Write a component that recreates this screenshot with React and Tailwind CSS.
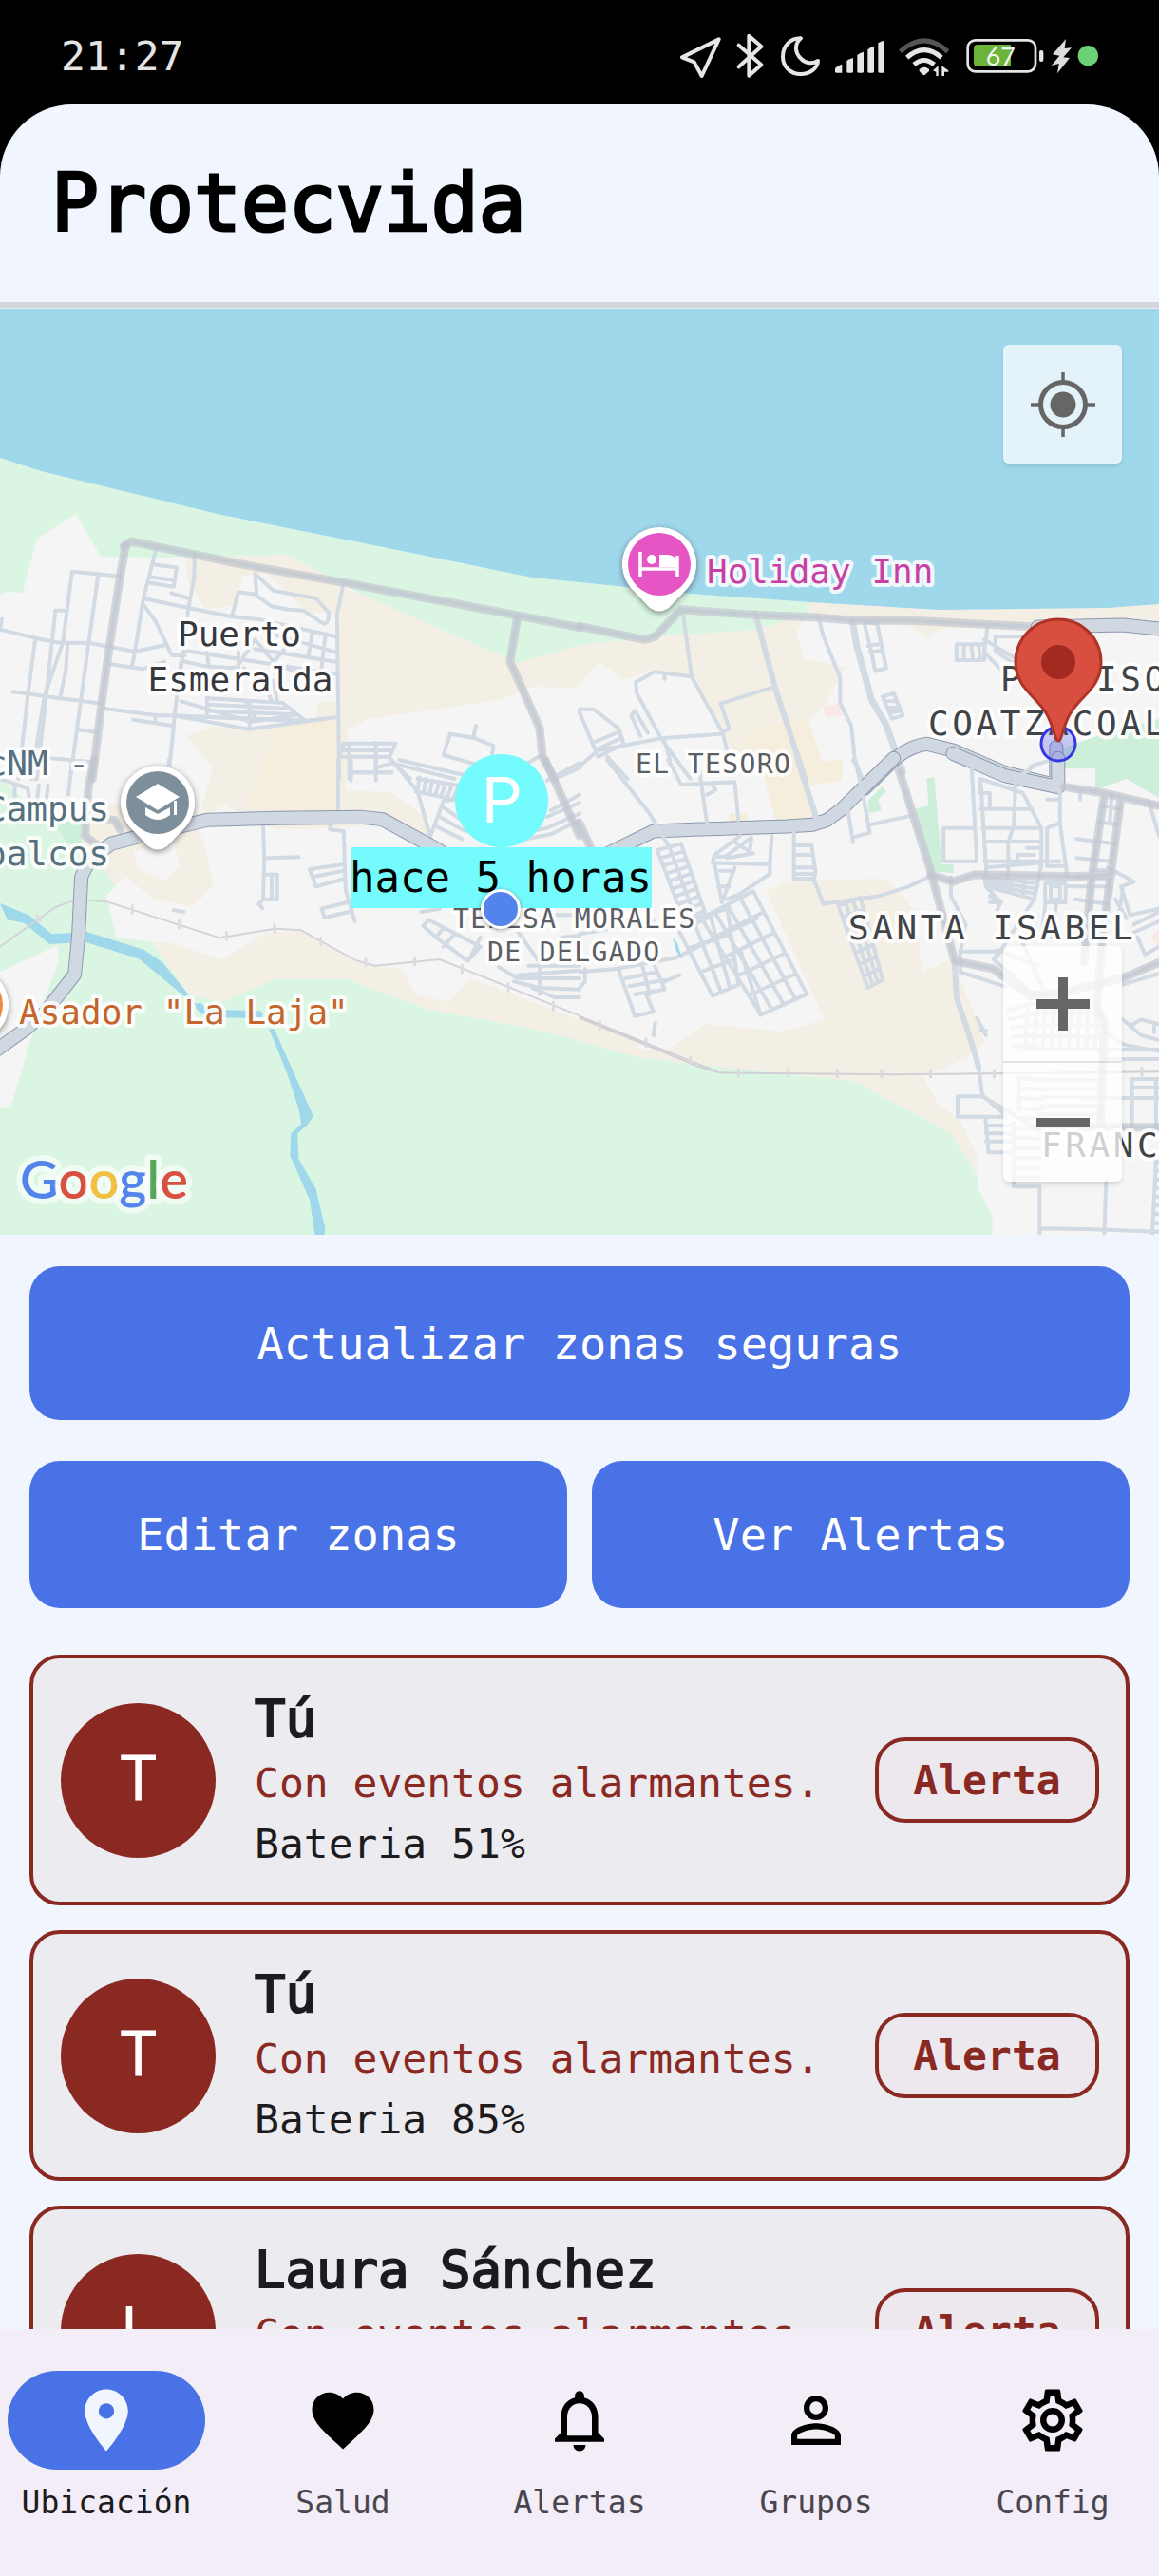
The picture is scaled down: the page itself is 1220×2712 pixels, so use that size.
import React from "react";
import {
  MdLocationOn,
  MdFavorite,
  MdNotificationsNone,
  MdPersonOutline,
  MdOutlineSettings,
} from "react-icons/md";

const members = [
  { id: 1, name: "Tú", initial: "T", battery: 51 },
  { id: 2, name: "Tú", initial: "T", battery: 85 },
  { id: 3, name: "Laura Sánchez", initial: "L", battery: 85 },
];

const tabs = [
  { label: "Ubicación", Icon: MdLocationOn, active: true },
  { label: "Salud", Icon: MdFavorite },
  { label: "Alertas", Icon: MdNotificationsNone },
  { label: "Grupos", Icon: MdPersonOutline },
  { label: "Config", Icon: MdOutlineSettings },
];

function StatusIcon({ x, w, className, children }) {
  return (
    <svg viewBox={`${x} 15 ${w} 180`} className={`h-[60px] ${className}`} aria-hidden="true">
      {children}
    </svg>
  );
}

function StatusBar() {
  return (
    <div className="flex h-[110px] shrink-0 items-center justify-between bg-black px-16 pt-2">
      <time className="text-[43px] leading-none text-[#e4e4e4]">21:27</time>
      <div className="-mt-2 flex items-center">
        <StatusIcon x={48} w={168} className="w-14">
          <path d="M170 64 L54 121 L92 136 L116 180 Z" fill="none" stroke="#e6e6e6" strokeWidth="12" strokeLinejoin="round" />
        </StatusIcon>
        <StatusIcon x={216} w={126} className="w-[42px]">
          <path d="M233 83 L304 145 L265 179 V53 L304 87 L233 151" fill="none" stroke="#e6e6e6" strokeWidth="12" strokeLinejoin="round" strokeLinecap="round" />
        </StatusIcon>
        <StatusIcon x={342} w={168} className="w-14">
          <path d="M429 61 C394 60 372 87 372 119 C372 150 396 174 428 174 C459 174 482 155 483 132 C466 143 445 141 430 126 C408 105 409 78 429 61 Z" fill="none" stroke="#e6e6e6" strokeWidth="12" strokeLinejoin="round" />
        </StatusIcon>
        <StatusIcon x={510} w={204} className="w-[68px]">
          <g fill="#e6e6e6">
            <path d="M537 156 Q546 146 559 143 V170 H541 Q537 170 537 166Z" />
            <path d="M574 132 Q582 126 594 123 V166 Q594 170 590 170 H578 Q574 170 574 166Z" />
            <path d="M607 114 Q616 106 627 104 V166 Q627 170 623 170 H611 Q607 170 607 166Z" />
            <path d="M640 97 Q648 89 660 86 V166 Q660 170 656 170 H644 Q640 170 640 166Z" />
            <path d="M673 76 Q681 70 693 68 V166 Q693 170 689 170 H677 Q673 170 673 166Z" />
          </g>
        </StatusIcon>
        <StatusIcon x={714} w={210} className="w-[70px]">
          <g fill="none" strokeWidth="15">
            <path d="M743 103 Q818 34 893 103" stroke="#555" />
            <path d="M764 122 Q818 74 873 122" stroke="#e6e6e6" />
            <path d="M786 144 Q818 117 850 144" stroke="#e6e6e6" />
          </g>
          <path d="M803 159 Q818 146 834 159 L834 165 L820 177 H815 L803 165Z" fill="#e6e6e6" />
          <path d="M846 163 L863 148 V180 H856 V167 Z M874 180 V148 L895 163 V167 H882 V180Z" fill="#e6e6e6" />
        </StatusIcon>
        <StatusIcon x={924} w={282} className="w-[94px]">
          <rect x="956" y="67" width="214" height="99" rx="24" fill="none" stroke="#e6e6e6" strokeWidth="8" />
          <path d="M987 81 H1092 V150 H987 Q975 150 975 138 V93 Q975 81 987 81Z" fill="#6cb33a" />
          <rect x="1182" y="99" width="13" height="36" rx="6" fill="#e6e6e6" />
          <text x="1060" y="146" textAnchor="middle" fill="#f2f7ee" fontSize="80" className="font-['Lato',sans-serif]">67</text>
        </StatusIcon>
        <StatusIcon x={1206} w={90} className="w-[30px]">
          <path d="M1266 63 L1224 112 L1246 116 L1220 147 L1244 141 L1239 172 L1278 123 L1258 121 L1284 91 L1262 93Z" fill="#dcdcdc" />
        </StatusIcon>
        <StatusIcon x={1296} w={72} className="w-6">
          <circle cx="1336" cy="116" r="32" fill="#6dd074" />
        </StatusIcon>
      </div>
    </div>
  );
}

// Evenly spaced lines that join edge a-b to edge c-d.
function hatch(a, b, c, d, n) {
  let out = "";
  for (let i = 0; i <= n; i++) {
    const t = i / n;
    const at = (p, q) => `${Math.round(p[0] + (q[0] - p[0]) * t)} ${Math.round(p[1] + (q[1] - p[1]) * t)}`;
    out += `M${at(a, b)}L${at(c, d)}`;
  }
  return out;
}

function mesh(a, b, c, d, rows, cols) {
  return hatch(a, d, b, c, rows) + hatch(a, b, d, c, cols);
}

const SAND = "#f4efe4";
const GREEN = "#daf6e3";
const WATER = "#a0d8eb";

function Line({ d, w = 4, c = "#d2dae3", o = 1 }) {
  return (
    <path d={d} fill="none" stroke={c} strokeWidth={w} strokeOpacity={o} strokeLinejoin="round" strokeLinecap="round" vectorEffect="non-scaling-stroke" />
  );
}

function Avenue({ d }) {
  return (
    <>
      <Line d={d} w={15} c="#8c98ad" />
      <Line d={d} w={13} c="#d0d8e2" />
    </>
  );
}

function Highway({ d, w = 9 }) {
  return (
    <>
      <Line d={d} w={w} c="#c5c8d0" o={0.7} />
      <Line d={d} w={w - 5} c="#bcc5cf" o={0.5} />
    </>
  );
}

// The map is drawn in four quadrants that share one local scale.
const NW = "translate(0 320) scale(.38903 .33333)";
const NE = "translate(610 320) scale(.38903 .33333)";
const SW = "translate(0 800) scale(.38903 .33333)";
const SE = "translate(610 800) scale(.38903 .33333)";

function Terrain() {
  return (
    <>
      <rect x="0" y="325" width="1220" height="975" fill="#f5f5f5" />
      <path fill={SAND} d="M379 625L545 698L610 679L707 669L797 663L849 647L838 667L847 693L890 702L867 745L851 758L863 803L773 793L760 773L731 712L688 705L657 716L631 697L607 724L560 723L525 737L389 757L366 767L365 832L412 834L447 860L453 880L401 868L323 873L288 873L237 848L210 860L224 807L196 775L222 765L265 768L356 757V617Z" />
      <path fill="#f6eedd" d="M289 763L356 757V860H330L260 850L280 800ZM796 766L851 758L866 803L886 798L886 822L850 827L858 860L817 865L800 803L780 790Z" />
      <g transform={NW}>
        <path fill={SAND} d="M500 800L780 792L930 885L910 975H835L720 850L655 860L640 950L555 965L510 880Z M858 1258H915V1310H858Z" />
      </g>
      <path fill={GREEN} d="M0 482L43 496L233 542L408 577L560 608L610 613L727 625L853 634L849 647L797 663L707 669L610 679L545 698L379 625L303 584L233 586L163 587L106 586L80 541L39 567L24 624L6 623L0 627Z" />
      <path fill={SAND} d="M853 634L987 642L1166 640L1220 636V655L1140 651L1060 658L990 662L975 671L960 660L849 648Z" />
      <path fill={WATER} d="M0 325H1220V636L1166 640L987 642L853 634L727 625L610 613L560 608L408 577L233 542L43 496L0 482Z" />
      <g transform={NE}>
        <path fill="#cdefd9" d="M1305 1405L1400 1365L1568 1310V1560L1480 1500L1396 1535V1468H1305Z" />
        <path fill="#fae8e6" d="M660 1275L710 1258L718 1300L668 1308Z" />
      </g>
      <g transform={SW}>
        <path fill={GREEN} d="M0 60L150 210L220 200L265 310L315 395L287 430L315 560L410 575L510 740L600 765L745 690L940 692L1150 785L1440 850L1570 886V1500H0V1098L30 1093L100 820L158 640L157 585L0 670Z" />
        <path fill="#cdefd9" d="M140 200L220 190L218 270L185 262Z" />
        <path fill={SAND} d="M220 130L330 140L440 240L520 190L548 250L577 395L525 462L415 440L340 368L310 395L265 320L225 290Z" />
        <path fill="#f5f5f5" d="M360 290L470 260L487 330L450 382L375 345Z" />
        <path fill={SAND} d="M410 572L470 580L600 632L720 545L815 540L960 640L1085 660L1125 742L1215 765L1275 690L1570 822V886L1440 850L1150 785L940 692H745L600 765L510 740Z" />
      </g>
      <g transform={SE}>
        <path fill={GREEN} d="M-2 888L160 940L380 970L745 1015L1005 1180L1077 1315V1350L1117 1440V1500H-2Z" />
        <path fill={SAND} d="M-2 805L160 880V915L240 915L340 835L550 857L662 820L505 415L575 378L830 375L905 470L927 668L1010 630L1097 890L1050 940L930 1000L970 1085L1030 1140L1075 1250V1310L1005 1180L745 1015L380 970L160 940L-2 888Z" />
        <path fill="#cdefd9" d="M905 155L945 145L938 60L960 55L980 330H1012V358L955 352ZM780 130L820 82L830 100L808 125L817 160L782 168Z" />
        <path fill="#f5efd9" d="M405 170H455L460 240H405Z" />
        <path fill="#fae8e6" d="M1545 560L1570 530V590Z" />
      </g>
    </>
  );
}

function Streets() {
  return (
    <>
      <g transform={SW}>
        <Line d="M540 780L560 800L700 805" w={8} c={WATER} />
        <path fill={WATER} d="M0 453L78 490L140 550L235 543L390 600L440 640L520 755L555 800L490 738L375 628L230 575L135 582L65 515L20 505Z M728 850L742 850L815 1040L848 1125L830 1155L805 1180L808 1260L855 1355L880 1480L878 1500H852L838 1390L785 1250L787 1180L815 1150L808 1100L775 985Z" />
        <Line d="M0 590L150 465L210 440L290 448L595 562L745 533L815 538L960 632L1015 650L1190 630L1568 808" w={2} c="#d3d3d8" />
        <Line d="M100 490L108 510M358 460V485M484 508V532M613 545V568M743 520V545M868 562V585M990 628V650M1122 625V648M1250 648V672M1375 706V730M1497 765V790" w={3} c="#dddde0" />
      </g>
      <g transform={SE}>
        <Line d="M0 810L380 988L850 994L1568 985M0 815L320 968L385 990" w={2} c="#d0d0d5" />
        <Line d="M55 825V850M180 882V905M300 938V960M430 978V1000M565 978V1000M697 980V1002M817 980V1002M950 980V1002M1122 980V1002M1522 972V995" w={3} c="#dbdbdf" />
      </g>

      <g transform={NW}>
        <Line d="M0 1028L95 1055L160 1070L240 1070L365 1098L445 1078M195 845L325 860M195 845L170 1070L120 1240L85 1500M150 968H175M150 968L125 1240L100 1500M265 862L240 1070L190 1500M35 1225L160 1245L275 1262M95 1062L75 1240L50 1500M183 1075L178 1160L163 1240M5 995L0 1030M212 1345L265 1353M137 1435L250 1447" />
        <Line d="M422 775L388 930L365 1098L358 1140M412 823L478 832L470 893L400 880M405 862L470 872M527 790L525 865L510 960L490 1150M388 930L510 960L625 987L705 997L908 1050M463 913L510 930M388 950L420 1000L465 1110H500M300 1138L385 1153L445 1130M283 1278L425 1300H470L820 1318L915 1305M470 1300L672 1343L915 1305M490 1130L472 1300L470 1335L455 1500M360 1313L470 1333M420 1300V1315" />
        <Line d="M690 853L740 905L855 930L890 975Q890 1010 875 1010L820 968L780 965L735 955L695 922ZM645 910L695 917M645 910L628 985M930 880L912 980L918 1500M500 1095L915 1170M700 1030L908 1100M690 1090L910 1130M845 1040L835 1110M880 1050L870 1150M500 1130L560 1145M560 1100L565 1145L640 1150M645 1140L690 1060L740 1130L770 1090M645 1100V1150M770 1150L800 1160M490 1255L680 1320L800 1298" />
        <Line d={mesh([560, 1245], [765, 1260], [825, 1315], [560, 1305], 3, 2)} />
        <Line d="M675 1260V1340M690 1170L720 1210L735 1255M740 1190L750 1255M660 1150L700 1200" />
        <Line d="M930 1388H1070L1055 1430H918M945 1388V1500M1017 1385V1480M930 1410H1060M1055 1440L1110 1500M1017 1465L1060 1450L1230 1500M950 1480H1060" />
        <Line d="M1288 1332L1280 1370M1218 1358L1280 1370L1335 1395L1330 1440M1218 1358L1200 1425L1290 1455M1420 1455L1465 1425M1500 1500L1568 1465M930 1388L918 1430" />
        <Highway d="M340 762L325 860L295 1090L275 1260L250 1500" />
        <Highway d="M335 765L355 750L675 827L930 880L1240 948L1568 1022" />
        <Highway d="M1400 990L1380 1130L1415 1220L1460 1340L1468 1430L1500 1500" />
      </g>

      <g transform={NE}>
        <Line d="M280 975L303 1175M203 1162L303 1177M203 1162L152 1195L155 1230L220 1370M303 1177L385 1350L400 1410M230 1170V1185M525 1210L382 1262L405 1340L380 1358L222 1372L50 1410L0 1460M0 1280H38L105 1340L120 1390L50 1430L0 1290M38 1385L110 1350M50 1405L115 1370M140 1300L150 1285L185 1355M140 1300L165 1365M75 1430L130 1500M222 1375L300 1500M230 1380L245 1440" />
        <Line d="M475 975L530 1215L610 1500" w={6} />
        <Line d="M645 985L660 1050L705 1180V1260L735 1330L745 1440L765 1500M770 1005L790 1100L800 1160L830 1150L805 1010ZM780 1080L810 1075M785 1100L815 1095M820 1240L850 1230L875 1300L845 1310ZM835 1255H860M840 1275H866M845 1290L870 1285" />
        <Line d="M738 998L750 1080L790 1250L830 1330L875 1480" w={7} />
        <Line d="M1020 1075H1095V1125H1020ZM1040 1075V1125M1060 1080L1065 1125M1080 1080L1085 1125M1105 1010L1095 1100L1145 1160M1125 1050H1220M1125 1050V1095L1180 1140M1095 1060L1180 1120M1220 1460L1290 1435" />
        <Highway d="M0 1018L175 1060L205 1050L275 965L470 982L645 990L740 1000L900 1000L1240 1020" />
        <Avenue d="M1240 1020L1470 1014L1568 1026" />
        <Avenue d="M770 1532L860 1430Q900 1395 940 1390L1010 1410L1150 1480L1290 1520V1400" />
      </g>

      <g transform={SW}>
        <Line d="M457 0V20M0 60L75 90L80 130M40 80V120M105 80L100 130M130 80L125 130M195 0L185 110M95 20V60" />
        <Line d="M712 205L715 310L712 440L700 455L710 468M720 310L808 307M720 362H750V440H712M735 362V440M893 205V220L930 225L935 410L960 510M838 345L930 330M838 345L855 400L935 375M845 370L930 350M870 470L940 450M870 470L878 498L945 480M470 475L497 480M915 0V160M950 0V65M1017 0V65M950 40H1060" />
        <Line d="M1060 0L1130 100L1165 245M1130 60L1240 80M1125 100L1230 125L1200 130L1165 240M1200 150L1260 200L1370 240L1480 215L1568 170M1190 180L1250 220L1370 262L1490 235L1568 190M1180 210L1250 250M1480 180L1568 135M1490 160L1568 110M1300 60L1080 0M1480 65L1568 10" />
        <Line d={hatch([1135, 55], [1240, 85], [1130, 100], [1225, 125], 6)} />
        <Line d="M1145 525L1160 505L1300 590L1265 635L1185 565ZM1200 530L1180 560M1230 550L1200 590M1300 560L1270 630M1400 540L1460 640V740M1350 655L1400 690H1568M1390 700L1460 720L1568 725M1400 680L1568 665M1430 650H1568M1440 720L1500 750H1568M1480 490H1568M1520 560L1568 555M1140 480L1190 470" />
        <Highway d="M255 0L240 80L230 240L270 275M1475 0L1568 240" />
        <Highway d="M255 180L310 190L325 220" />
        <Avenue d="M-8 915L70 850L120 800L202 678L212 560L220 370L240 320L300 265L400 235L560 190L750 184L980 181L1035 188L1180 280L1260 340L1568 350" />
      </g>

      <g transform={SE}>
        <Avenue d="M-10 350L60 305L200 225L310 220L560 210L630 205L670 190L710 155L810 40L850 -5" />
        <Avenue d="M1010 -20L1150 50L1295 86V-5" />
        <Line d="M75 0L190 170L240 270M240 0L275 78L330 75L420 70L430 190M320 0L345 200M345 110L368 95L360 80M435 240L365 300L360 325L515 330L520 240M365 305H395L465 245M400 310L470 295M420 260L460 290L465 250M580 230V375H635M580 270H628L638 350L635 375M580 300H630M580 340H638M580 360H638" />
        <Line d={mesh([210, 285], [275, 265], [345, 500], [290, 530], 10, 2)} />
        <Line d={mesh([330, 500], [470, 415], [615, 740], [490, 805], 5, 4)} />
        <Line d={mesh([260, 520], [400, 470], [430, 710], [360, 745], 3, 3)} />
        <Line d="M365 325L385 450M420 340L385 450M425 430L515 360V330M380 350H415M375 400H405M400 440L440 420M0 550L200 510M0 670L100 660L260 625L480 500M105 660L150 810L200 795L180 740M125 690L210 670M135 715L230 695M150 740L230 725L200 640M170 650L190 740M0 720L15 700V660M230 700L270 680M205 830L200 870M435 600L490 805" />
        <Line d="M590 0L640 180" w={6} />
        <Line d="M725 150L740 260M740 245L785 230L770 130L750 20L740 0M785 205L900 175M635 380L660 455L810 430L890 400L945 370" />
        <Line d={mesh([700, 460], [760, 435], [820, 695], [780, 720], 7, 3)} />
        <Line d="M1060 0L1075 320H985V215H1065M1085 60L1100 340V400L1140 450L1120 500M1085 60L1200 105L1250 215V330L1230 440L1130 620M1085 60V105H1110V155M1085 155H1225M1100 340L1250 325M1180 70L1175 210L1160 260V370M1090 215H1250M1095 258H1250M1230 20L1180 60M1300 90V200L1265 215V335H1310M1300 200L1320 370M1265 125H1300M1210 278H1250M1185 300H1230M1185 300V330M1095 320H1300" />
        <Line d={mesh([1095, 370], [1240, 390], [1230, 440], [1100, 400], 3, 4)} />
        <Line d="M1260 390H1315V450H1260ZM1275 400H1300V440H1275ZM1260 460L1250 560M1290 460L1275 560M1320 400L1440 400M1340 440L1430 455M1345 370L1440 380M1345 250L1450 265M1345 310L1440 320M1390 348H1440M1405 195L1455 205M1415 145L1465 155M1355 100V125M1440 110L1435 200M1110 430L1140 445M1110 450H1140M1430 340L1500 385L1465 400L1490 490L1568 470M1500 520L1568 480M1500 545L1568 510M1530 615L1568 590M1530 615L1510 560M1540 130L1568 240M1450 440L1480 500M1470 410L1450 560M1005 370V430L1045 520L1030 610V670L1150 715M1030 605H1135L1120 630L1230 740M1130 600L1240 650M1200 580L1260 740" />
        <Line d="M1015 640L1020 750L1060 890L1080 970" w={6} />
        <Line d="M1080 970L1090 1060L1150 1120M1023 1063H1090L1240 1165M1023 1063V1127H1150M1075 815L1100 870M1085 855H1100M1098 1130L1107 1240H1175M1100 1155H1175M1100 1180H1175M1100 1205H1175M1175 1145V1348H1245V1500M1245 1480L1370 1482L1568 1490M1425 1330L1420 1500M1420 860L1475 900L1568 920M1420 945H1568M1470 820L1520 870L1568 885M1490 840L1520 820L1568 835M1555 840V860M1495 1008L1495 1160M1495 1008H1568M1495 1035H1568M1415 1068H1568M1560 1010V1160M1420 915H1568M1470 710L1568 675" />
        <Line d={hatch([1190, 1005], [1175, 1320], [1260, 1010], [1245, 1320], 10)} />
        <Line d={hatch([1260, 1010], [1245, 1120], [1415, 1012], [1410, 1120], 4)} />
        <Line d={hatch([1230, 800], [1200, 910], [1410, 800], [1410, 915], 3)} />
        <Line d={hatch([1215, 770], [1400, 780], [1205, 910], [1395, 915], 8)} />
        <Line d={hatch([1160, 790], [1175, 905], [1225, 770], [1225, 900], 4)} />
        <Line d={hatch([1560, 1270], [1550, 1490], [1570, 1270], [1570, 1490], 8)} />
        <Line d="M1560 1265L1550 1500M1190 1005V1110" />
        <path d="M252 560L265 580L278 630L262 605Z" fill={WATER} />
        <Highway d="M0 200L35 290M865 35L950 350L1015 635L1120 660L1220 745L1310 735L1470 690L1568 640" />
        <Highway d="M950 362L1010 385L1070 362L1340 368L1440 362M1310 85L1420 105L1568 145M1420 110L1385 380L1365 640M1465 120L1415 560L1400 780L1420 830L1410 1150" />
        <Highway d="M1240 1160H1568" />
      </g>
    </>
  );
}

function Label({ x, y, color, anchor = "start", size = 36, className = "", children }) {
  return (
    <text
      x={x}
      y={y}
      fill={color}
      stroke="#ffffff"
      strokeOpacity="0.85"
      strokeWidth="8"
      strokeLinejoin="round"
      paintOrder="stroke"
      textAnchor={anchor}
      fontSize={size}
      className={className}
    >
      {children}
    </text>
  );
}

function PlacePin({ x, y, color, children }) {
  return (
    <g transform={`translate(${x} ${y})`}>
      <path d="M0 -39A39 39 0 0 1 30 25L10 46Q0 53 -10 46L-30 25A39 39 0 0 1 0 -39Z" fill="#fff" className="drop-shadow-[0_2px_3px_rgba(0,0,0,0.45)]" />
      <circle r="33" fill={color} />
      {children}
    </g>
  );
}

function MapButton({ label, className, children }) {
  return (
    <button type="button" aria-label={label} className={`flex w-[125px] items-center justify-center ${className}`}>
      {children}
    </button>
  );
}

function MapView() {
  return (
    <section aria-label="Mapa" className="relative h-[975px] shrink-0 overflow-hidden">
      <svg viewBox="0 325 1220 975" preserveAspectRatio="xMidYMid slice" className="h-full w-full">
        <Terrain />
        <Streets />

        <Label x={252} y={680} color="#38373c" anchor="middle">Puerto</Label>
        <Label x={253} y={728} color="#38373c" anchor="middle">Esmeralda</Label>
        <Label x={744} y={614} color="#c93fa5">Holiday Inn</Label>
        <Label x={669} y={814} color="#5b5e63" size={28} className="tracking-wider">EL TESORO</Label>
        <Label x={477} y={977} color="#5b5e63" size={28} className="tracking-wider">TERESA MORALES</Label>
        <Label x={513} y={1012} color="#5b5e63" size={28} className="tracking-wider">DE DELGADO</Label>
        <Label x={893} y={989} color="#414447" className="tracking-widest">SANTA ISABEL</Label>
        <Label x={1053} y={727} color="#414447" className="tracking-widest">PARAISO</Label>
        <Label x={977} y={774} color="#414447" className="tracking-widest">COATZACOAL</Label>
        <Label x={1096} y={1218} color="#414447" className="tracking-widest">FRANC</Label>
        <Label x={94} y={816} color="#56707d" anchor="end">TecNM -</Label>
        <Label x={115} y={864} color="#56707d" anchor="end">Campus</Label>
        <Label x={115} y={911} color="#56707d" anchor="end">oalcos</Label>
        <Label x={20} y={1078} color="#c5642b">Asador "La Laja"</Label>

        <PlacePin x={694} y={594} color="#e655c4">
          <path d="M-20 -13V13M19 -9V13M-20 5H19" fill="none" stroke="#fff" strokeWidth="3.5" />
          <circle cx="-8" cy="-5" r="5" fill="#fff" />
          <path d="M0 3V-10H9Q19 -9 19 1V3Z" fill="#fff" />
        </PlacePin>
        <PlacePin x={166} y={845} color="#7d8f9a">
          <path d="M0 -20L23 -6L0 8L-23 -6Z M-13 5L0 12L13 5V13Q0 23 -13 13Z M17 -2H20V13H17Z" fill="#fff" />
        </PlacePin>
        <PlacePin x={-30} y={1058} color="#f08a3c" />

        <circle cx="1114" cy="783" r="18" fill="#4d4dea" fillOpacity="0.28" stroke="#3535e3" strokeWidth="3" />
        <path d="M1114 780C1110 780 1109 762 1100 749C1089 732 1069 723 1069 697A45 45 0 0 1 1159 697C1159 723 1139 732 1128 749C1119 762 1118 780 1114 780Z" fill="#d94f3f" stroke="#b03328" strokeWidth="3" />
        <circle cx="1114" cy="697" r="18" fill="#a32a20" />

        <circle cx="528" cy="843" r="49" fill="#74fbfd" />
        <text x="528" y="866" textAnchor="middle" fontSize="66" fill="#fff" className="font-['Roboto',sans-serif]">P</text>
        <rect x="370" y="892" width="316" height="64" fill="#74fbfd" />
        <text x="527" y="939" textAnchor="middle" fontSize="44" fill="#000">hace 5 horas</text>
        <circle cx="527" cy="957" r="19.5" fill="#5384ec" stroke="#fff" strokeWidth="3" className="drop-shadow-[0_1px_2px_rgba(0,0,0,0.4)]" />

        <text x="21" y="1262" fontSize="56" stroke="#fff" strokeOpacity="0.6" strokeWidth="12" strokeLinejoin="round" paintOrder="stroke" className="font-['Lato',sans-serif] font-semibold">
          <tspan fill="#5384ec">G</tspan>
          <tspan fill="#d85140">o</tspan>
          <tspan fill="#f1bf42">o</tspan>
          <tspan fill="#5384ec">g</tspan>
          <tspan fill="#58a55c">l</tspan>
          <tspan fill="#d85140">e</tspan>
        </text>
      </svg>

      <MapButton label="Mi ubicación" className="absolute top-[38px] right-[39px] h-[125px] rounded-md bg-white/70 shadow-md">
        <svg viewBox="0 0 70 70" className="h-[70px] w-[70px]" aria-hidden="true">
          <circle cx="35" cy="35" r="23.5" fill="none" stroke="#666" strokeWidth="5" />
          <circle cx="35" cy="35" r="13.5" fill="#666" />
          <path d="M35 1V11M35 59V69M1 35H11M59 35H69" stroke="#666" strokeWidth="3.5" />
        </svg>
      </MapButton>

      <div className="absolute right-[39px] bottom-14 divide-y-2 divide-black/10 rounded-md bg-white/75 shadow-md">
        <MapButton label="Acercar" className="h-[123px]">
          <svg viewBox="0 0 56 56" className="h-14 w-14" aria-hidden="true">
            <path d="M28 0V56M0 28H56" stroke="#666" strokeWidth="10" />
          </svg>
        </MapButton>
        <MapButton label="Alejar" className="h-[125px]">
          <svg viewBox="0 0 56 56" className="h-14 w-14" aria-hidden="true">
            <path d="M0 28H56" stroke="#666" strokeWidth="10" />
          </svg>
        </MapButton>
      </div>
    </section>
  );
}

function ActionButton({ className, children }) {
  return (
    <button type="button" className={`rounded-[32px] bg-[#4872e5] text-[47px] leading-none text-white ${className}`}>
      {children}
    </button>
  );
}

function MemberCard({ member }) {
  return (
    <li className="flex h-[264px] shrink-0 items-center rounded-[32px] border-4 border-[#8a2822] bg-[#ecebf0] pr-7 pl-[29px]">
      <div className="flex size-[163px] shrink-0 items-center justify-center rounded-full bg-[#8a2822] text-[66px] leading-none text-white">
        {member.initial}
      </div>
      <div className="ml-[41px] min-w-0 flex-1 whitespace-nowrap text-[43px] leading-[64px] text-[#1c1b20]">
        <h2 className="text-[54px] leading-[70px] [-webkit-text-stroke:2px_#1c1b20]">{member.name}</h2>
        <p className="text-[#8a2822]">Con eventos alarmantes.</p>
        <p>Bateria {member.battery}%</p>
      </div>
      <button type="button" className="flex h-[90px] w-[236px] shrink-0 items-center justify-center rounded-[32px] border-4 border-[#8a2822] bg-[#ede8ee] text-[43px] leading-none font-bold text-[#8a2822]">
        Alerta
      </button>
    </li>
  );
}

function BottomNav() {
  return (
    <nav className="grid shrink-0 grid-cols-5 gap-[41px] bg-[#f2edf6] px-2 pt-11 pb-[58px]">
      {tabs.map(({ label, Icon, active }) => (
        <a
          key={label}
          href={`#${label}`}
          aria-current={active ? "page" : undefined}
          className={`flex flex-col items-center gap-4 text-[33px] leading-[38px] ${active ? "text-[#1c1b20]" : "text-[#49454f]"}`}
        >
          <span className={`flex h-[104px] w-full items-center justify-center rounded-full ${active ? "bg-[#4872e5] text-[#f1f6fe]" : "text-black"}`}>
            <Icon size={78} aria-hidden="true" />
          </span>
          {label}
        </a>
      ))}
    </nav>
  );
}

export default function App() {
  return (
    <div className="flex h-screen flex-col overflow-hidden bg-black font-['DejaVu_Sans_Mono',monospace]">
      <StatusBar />
      <div className="flex min-h-0 flex-1 flex-col overflow-hidden rounded-t-[76px] bg-[#f1f6fe]">
        <header className="flex h-[208px] shrink-0 items-center px-[54px]">
          <h1 className="text-[83px] leading-none text-black [-webkit-text-stroke:3px_black]">Protecvida</h1>
        </header>
        <div className="h-[7px] shrink-0 border-b border-[#e6ebee] bg-[#d3d6da]" />
        <main className="flex min-h-0 flex-1 flex-col overflow-y-auto [scrollbar-width:none]">
          <MapView />
          <div className="flex flex-col px-[31px] pt-[33px]">
            <ActionButton className="h-[162px]">Actualizar zonas seguras</ActionButton>
            <div className="mt-[43px] grid grid-cols-2 gap-[26px]">
              <ActionButton className="h-[155px]">Editar zonas</ActionButton>
              <ActionButton className="h-[155px]">Ver Alertas</ActionButton>
            </div>
            <ul className="mt-[49px] flex flex-col gap-[26px]">
              {members.map((member) => (
                <MemberCard key={member.id} member={member} />
              ))}
            </ul>
          </div>
        </main>
        <BottomNav />
      </div>
    </div>
  );
}
